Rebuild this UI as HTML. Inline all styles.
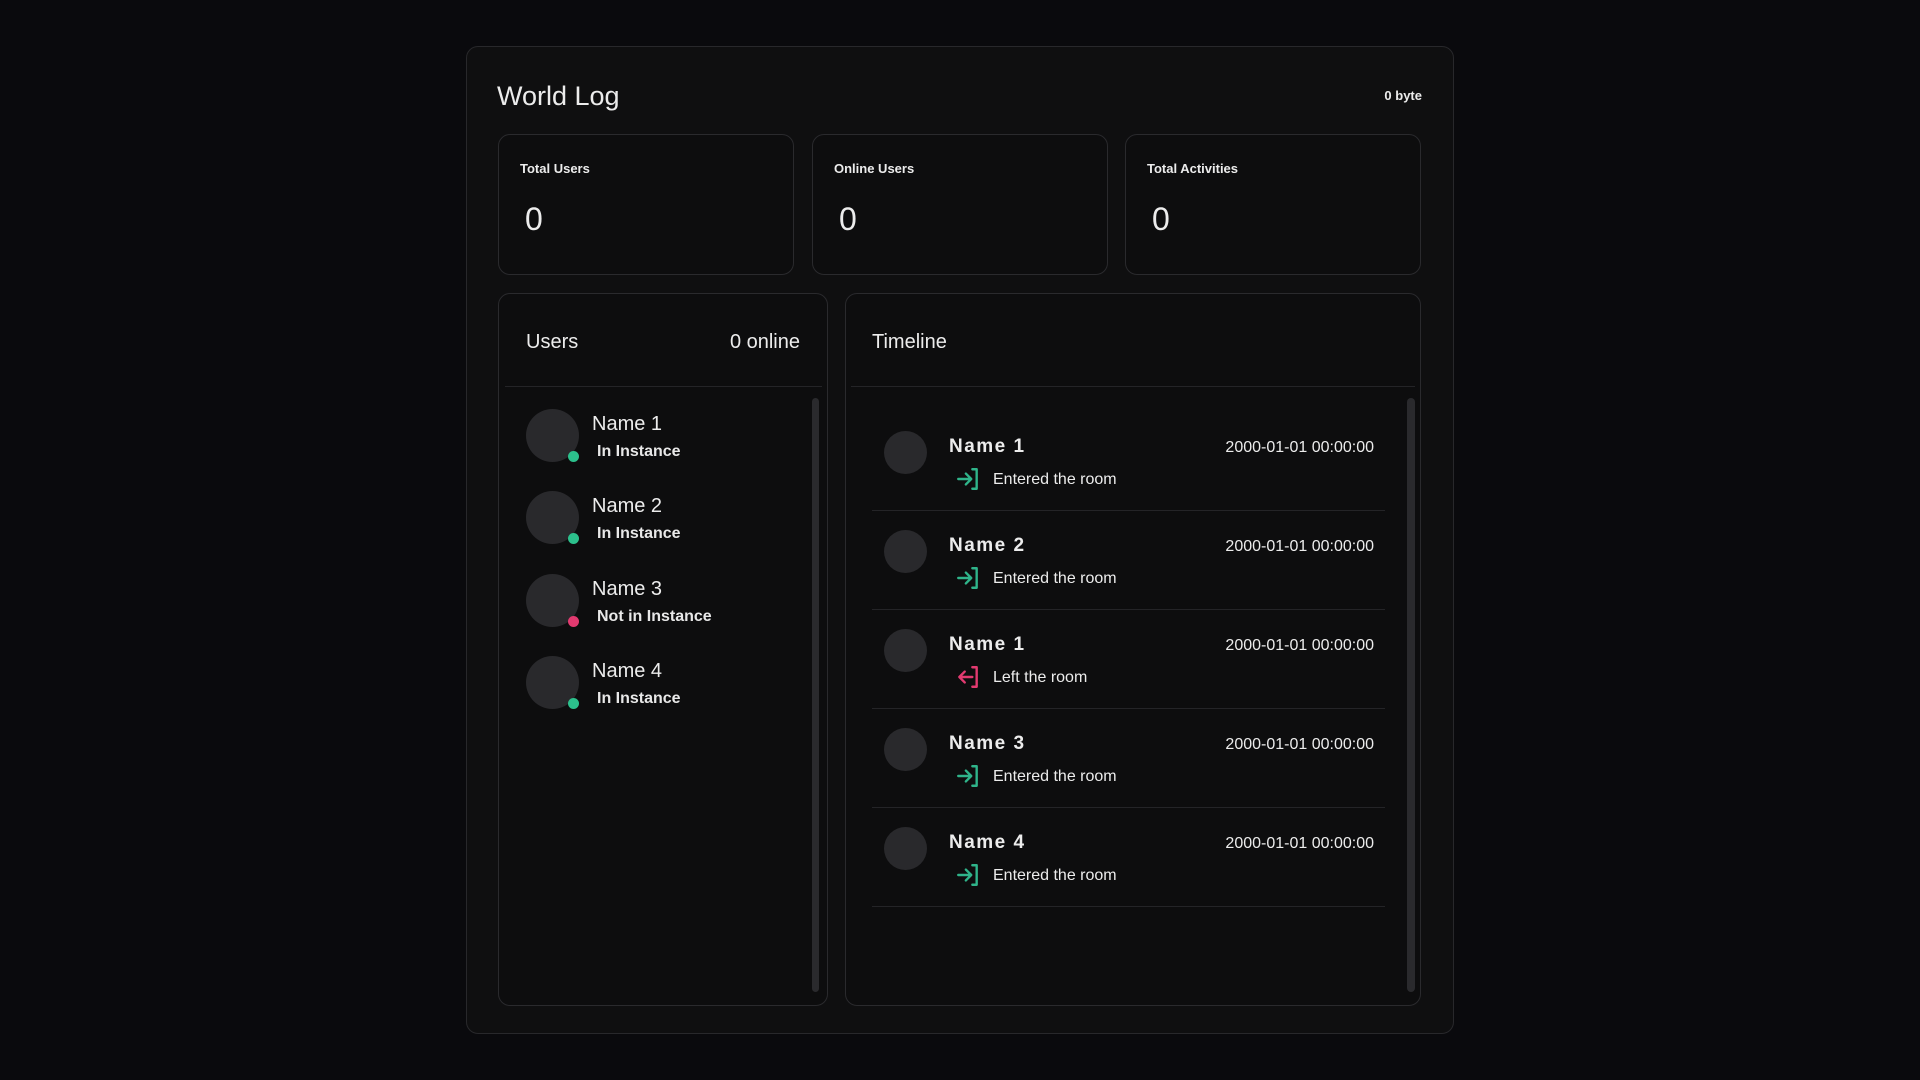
<!DOCTYPE html>
<html><head><meta charset="utf-8"><style>
*{margin:0;padding:0;box-sizing:border-box}
body{width:1920px;height:1080px;background:#0a0a0d;font-family:"Liberation Sans",sans-serif;color:#ececec;position:relative;overflow:hidden}
.a{position:absolute}
.panel{background:#0f0f10;border:1.5px solid #28282b;border-radius:12px}
.card{background:#0d0d0e;border:1.5px solid #2a2a2d;border-radius:12px}
.av{border-radius:50%;background:#29292c}
.dot{width:11px;height:11px;border-radius:50%}
.g{background:#2cc08c}.r{background:#e23a70}
.nm{font-size:20px;white-space:nowrap}
.sub{font-size:16px;font-weight:bold;white-space:nowrap;color:#e8e8e8}
.tn{font-size:19px;font-weight:bold;letter-spacing:1.5px;white-space:nowrap}
.dt{font-size:16px;white-space:nowrap;text-align:right;width:250px}
.tx{font-size:16px;white-space:nowrap}
.div{height:1px;background:#242427}
</style></head><body>
<div class="a panel" style="left:466px;top:46px;width:988px;height:988px"></div>
<div class="a" style="left:497px;top:81px;font-size:27px">World Log</div>
<div class="a" style="left:1362px;top:88px;width:60px;text-align:right;font-size:13px;font-weight:bold">0 byte</div>

<div class="a card" style="left:498px;top:134px;width:296px;height:141px"></div>
<div class="a card" style="left:812px;top:134px;width:296px;height:141px"></div>
<div class="a card" style="left:1125px;top:134px;width:296px;height:141px"></div>
<div class="a" style="left:520px;top:161px;font-size:13px;font-weight:bold">Total Users</div>
<div class="a" style="left:834px;top:161px;font-size:13px;font-weight:bold">Online Users</div>
<div class="a" style="left:1147px;top:161px;font-size:13px;font-weight:bold">Total Activities</div>
<div class="a" style="left:525px;top:201px;font-size:32px">0</div>
<div class="a" style="left:839px;top:201px;font-size:32px">0</div>
<div class="a" style="left:1152px;top:201px;font-size:32px">0</div>

<div class="a card" style="left:498px;top:293px;width:330px;height:713px"></div>
<div class="a" style="left:526px;top:331px;font-size:20px">Users</div>
<div class="a" style="left:700px;top:331px;width:100px;text-align:right;font-size:20px">0 online</div>
<div class="a div" style="left:505px;top:386px;width:317px"></div>
<div class="a" style="left:812px;top:398px;width:7px;height:594px;background:#2a2a2d;border-radius:4px"></div>

<div class="a card" style="left:845px;top:293px;width:576px;height:713px"></div>
<div class="a" style="left:872px;top:331px;font-size:20px">Timeline</div>
<div class="a div" style="left:851px;top:386px;width:564px"></div>
<div class="a" style="left:1407px;top:398px;width:8px;height:594px;background:#2a2a2d;border-radius:4px"></div>

<div class="a av" style="left:526px;top:409px;width:53px;height:53px"></div><div class="a dot g" style="left:568px;top:451px"></div>
<div class="a nm" style="left:592px;top:413px">Name 1</div><div class="a sub" style="left:597px;top:443px">In Instance</div>
<div class="a av" style="left:526px;top:491px;width:53px;height:53px"></div><div class="a dot g" style="left:568px;top:533px"></div>
<div class="a nm" style="left:592px;top:495px">Name 2</div><div class="a sub" style="left:597px;top:525px">In Instance</div>
<div class="a av" style="left:526px;top:574px;width:53px;height:53px"></div><div class="a dot r" style="left:568px;top:616px"></div>
<div class="a nm" style="left:592px;top:578px">Name 3</div><div class="a sub" style="left:597px;top:608px">Not in Instance</div>
<div class="a av" style="left:526px;top:656px;width:53px;height:53px"></div><div class="a dot g" style="left:568px;top:698px"></div>
<div class="a nm" style="left:592px;top:660px">Name 4</div><div class="a sub" style="left:597px;top:690px">In Instance</div>

<svg width="0" height="0" style="position:absolute"><defs>
<symbol id="in" viewBox="0 0 24 24"><path d="M3 12h11M10 7l5 5-5 5M16 3h4v18h-4" fill="none" stroke="#2fb48a" stroke-width="2.2" stroke-linecap="round" stroke-linejoin="round"/></symbol>
<symbol id="out" viewBox="0 0 24 24"><path d="M16 12H4M9 7l-5 5 5 5M16 3h4v18h-4" fill="none" stroke="#e23a70" stroke-width="2.2" stroke-linecap="round" stroke-linejoin="round"/></symbol>
</defs></svg>

<div class="a" style="left:0;top:0">
<div class="a av" style="left:884px;top:431px;width:43px;height:43px"></div>
<div class="a tn" style="left:949px;top:436px">Name 1</div>
<div class="a dt" style="left:1124px;top:439px">2000-01-01 00:00:00</div>
<svg class="a" style="left:955px;top:466px" width="26" height="26"><use href="#in"/></svg>
<div class="a tx" style="left:993px;top:471px">Entered the room</div>
<div class="a div" style="left:872px;top:510px;width:513px"></div>
</div>
<div class="a" style="left:0;top:99px">
<div class="a av" style="left:884px;top:431px;width:43px;height:43px"></div>
<div class="a tn" style="left:949px;top:436px">Name 2</div>
<div class="a dt" style="left:1124px;top:439px">2000-01-01 00:00:00</div>
<svg class="a" style="left:955px;top:466px" width="26" height="26"><use href="#in"/></svg>
<div class="a tx" style="left:993px;top:471px">Entered the room</div>
<div class="a div" style="left:872px;top:510px;width:513px"></div>
</div>
<div class="a" style="left:0;top:198px">
<div class="a av" style="left:884px;top:431px;width:43px;height:43px"></div>
<div class="a tn" style="left:949px;top:436px">Name 1</div>
<div class="a dt" style="left:1124px;top:439px">2000-01-01 00:00:00</div>
<svg class="a" style="left:955px;top:466px" width="26" height="26"><use href="#out"/></svg>
<div class="a tx" style="left:993px;top:471px">Left the room</div>
<div class="a div" style="left:872px;top:510px;width:513px"></div>
</div>
<div class="a" style="left:0;top:297px">
<div class="a av" style="left:884px;top:431px;width:43px;height:43px"></div>
<div class="a tn" style="left:949px;top:436px">Name 3</div>
<div class="a dt" style="left:1124px;top:439px">2000-01-01 00:00:00</div>
<svg class="a" style="left:955px;top:466px" width="26" height="26"><use href="#in"/></svg>
<div class="a tx" style="left:993px;top:471px">Entered the room</div>
<div class="a div" style="left:872px;top:510px;width:513px"></div>
</div>
<div class="a" style="left:0;top:396px">
<div class="a av" style="left:884px;top:431px;width:43px;height:43px"></div>
<div class="a tn" style="left:949px;top:436px">Name 4</div>
<div class="a dt" style="left:1124px;top:439px">2000-01-01 00:00:00</div>
<svg class="a" style="left:955px;top:466px" width="26" height="26"><use href="#in"/></svg>
<div class="a tx" style="left:993px;top:471px">Entered the room</div>
<div class="a div" style="left:872px;top:510px;width:513px"></div>
</div>
</body></html>
